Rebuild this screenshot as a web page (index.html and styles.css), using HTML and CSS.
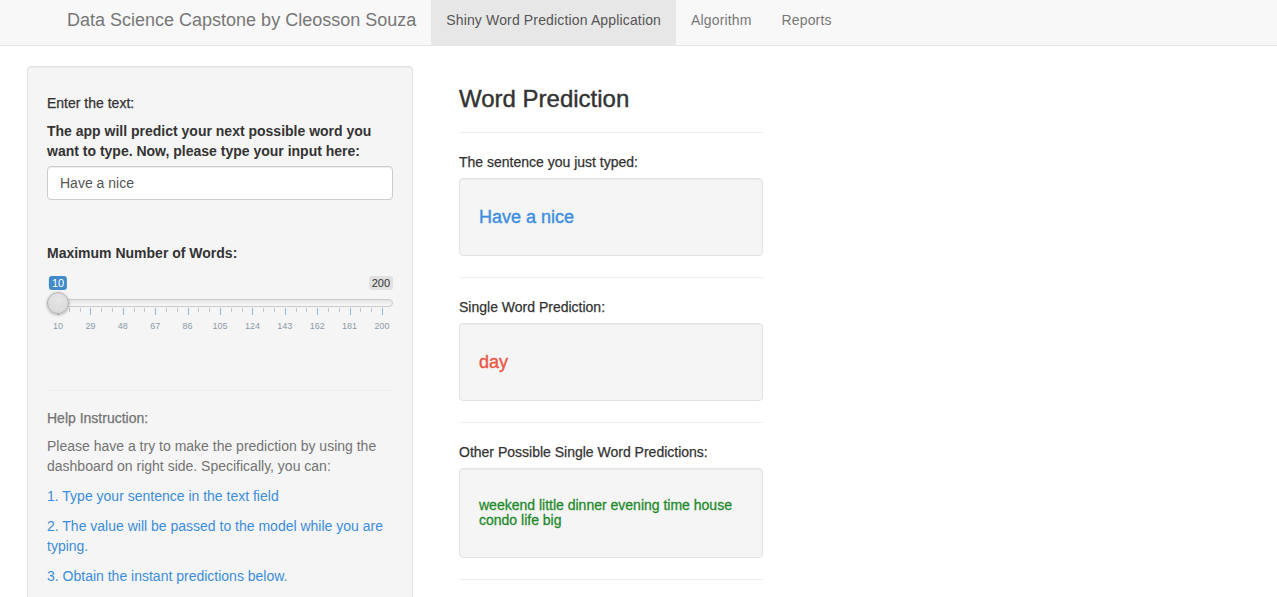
FILE: index.html
```html
<!DOCTYPE html>
<html lang="en">
<head>
<meta charset="utf-8">
<title>Shiny Word Prediction Application</title>
<link rel="stylesheet" href="styles.css">
</head>
<body>
<nav class="navbar">
  <span class="brand">Data Science Capstone by Cleosson Souza</span>
  <ul class="nav">
    <li class="nav-item active">Shiny Word Prediction Application</li>
    <li class="nav-item">Algorithm</li>
    <li class="nav-item">Reports</li>
  </ul>
</nav>

<div class="page">
  <aside class="well sidebar">
    <h5 class="h5">Enter the text:</h5>
    <div class="form-group">
      <label class="ctl-label">The app will predict your next possible word you want to type. Now, please type your input here:</label>
      <input class="text-input" type="text" value="Have a nice">
    </div>
    <div class="form-group slider-group">
      <label class="ctl-label">Maximum Number of Words:</label>
      <div class="irs">
        <span class="irs-single">10</span>
        <span class="irs-max">200</span>
        <div class="irs-line"></div>
        <div class="irs-grid">
          <span class="tick major" style="left:0px"></span>
          <span class="tick minor" style="left:10.8px"></span>
          <span class="tick minor" style="left:21.6px"></span>
          <span class="tick major" style="left:32.4px"></span>
          <span class="tick minor" style="left:43.2px"></span>
          <span class="tick minor" style="left:54px"></span>
          <span class="tick major" style="left:64.8px"></span>
          <span class="tick minor" style="left:75.6px"></span>
          <span class="tick minor" style="left:86.4px"></span>
          <span class="tick major" style="left:97.2px"></span>
          <span class="tick minor" style="left:108px"></span>
          <span class="tick minor" style="left:118.8px"></span>
          <span class="tick major" style="left:129.6px"></span>
          <span class="tick minor" style="left:140.4px"></span>
          <span class="tick minor" style="left:151.2px"></span>
          <span class="tick major" style="left:162px"></span>
          <span class="tick minor" style="left:172.8px"></span>
          <span class="tick minor" style="left:183.6px"></span>
          <span class="tick major" style="left:194.4px"></span>
          <span class="tick minor" style="left:205.2px"></span>
          <span class="tick minor" style="left:216px"></span>
          <span class="tick major" style="left:226.8px"></span>
          <span class="tick minor" style="left:237.6px"></span>
          <span class="tick minor" style="left:248.4px"></span>
          <span class="tick major" style="left:259.2px"></span>
          <span class="tick minor" style="left:270px"></span>
          <span class="tick minor" style="left:280.8px"></span>
          <span class="tick major" style="left:291.6px"></span>
          <span class="tick minor" style="left:302.4px"></span>
          <span class="tick minor" style="left:313.2px"></span>
          <span class="tick major" style="left:324px"></span>
          <span class="grid-text" style="left:0px">10</span>
          <span class="grid-text" style="left:32.4px">29</span>
          <span class="grid-text" style="left:64.8px">48</span>
          <span class="grid-text" style="left:97.2px">67</span>
          <span class="grid-text" style="left:129.6px">86</span>
          <span class="grid-text" style="left:162px">105</span>
          <span class="grid-text" style="left:194.4px">124</span>
          <span class="grid-text" style="left:226.8px">143</span>
          <span class="grid-text" style="left:259.2px">162</span>
          <span class="grid-text" style="left:291.6px">181</span>
          <span class="grid-text" style="left:324px">200</span>
        </div>
        <span class="irs-handle"></span>
      </div>
    </div>
    <hr class="rule">
    <div class="help">
      <h5 class="h5">Help Instruction:</h5>
      <p class="para">Please have a try to make the prediction by using the dashboard on right side. Specifically, you can:</p>
      <p class="para step">1. Type your sentence in the text field</p>
      <p class="para step">2. The value will be passed to the model while you are typing.</p>
      <p class="para step">3. Obtain the instant predictions below.</p>
    </div>
  </aside>

  <main class="main">
    <h3 class="title">Word Prediction</h3>
    <hr class="rule main-rule">
    <div class="out-label">The sentence you just typed:</div>
    <div class="well out-box"><h4 class="out-big blue">Have a nice</h4></div>
    <hr class="rule main-rule">
    <div class="out-label">Single Word Prediction:</div>
    <div class="well out-box"><h4 class="out-big red">day</h4></div>
    <hr class="rule main-rule">
    <div class="out-label">Other Possible Single Word Predictions:</div>
    <div class="well out-box"><h5 class="out-small green">weekend little dinner evening time house condo life big</h5></div>
    <hr class="rule main-rule">
  </main>
</div>
</body>
</html>
```

FILE: styles.css
```css
* { box-sizing: border-box; }

html, body {
  margin: 0;
  padding: 0;
}

body {
  font-family: "Liberation Sans", Arial, Helvetica, sans-serif;
  font-size: 14px;
  line-height: 1.42857;
  color: #333;
  background: #fff;
  overflow: hidden;
}

/* ---------- navbar ---------- */
.navbar {
  display: flex;
  height: 46px;
  padding-left: 52px;
  background: #f8f8f8;
  border-bottom: 1px solid #e7e7e7;
}

.brand {
  height: 45px;
  padding: 10px 15px 0;
  font-size: 18px;
  line-height: 20px;
  color: #777;
}

.nav {
  display: flex;
  margin: 0;
  padding: 0;
  list-style: none;
}

.nav-item {
  height: 45px;
  padding: 10px 15px 0;
  line-height: 20px;
  letter-spacing: 0.15px;
  color: #777;
}

.nav-item.active {
  background: #e7e7e7;
  color: #555;
}

/* ---------- page layout ---------- */
.page {
  display: flex;
  align-items: flex-start;
  gap: 46px;
  padding: 20px 0 0 27px;
}

.well {
  background: #f5f5f5;
  border: 1px solid #e3e3e3;
  border-radius: 4px;
  box-shadow: inset 0 1px 1px rgba(0, 0, 0, 0.05);
}

.sidebar {
  flex: 0 0 386px;
  padding: 19px;
  min-height: 600px;
}

.h5 {
  margin: 10px 0;
  font-size: 14px;
  font-weight: 500;
  line-height: 1.1;
  color: #333;
  -webkit-text-stroke: 0.25px currentColor;
}

.form-group {
  margin-bottom: 15px;
}

.ctl-label {
  display: block;
  margin-bottom: 5px;
  font-weight: 700;
  line-height: 20px;
}

.text-input {
  display: block;
  width: 100%;
  height: 34px;
  padding: 6px 12px;
  font: inherit;
  font-size: 14px;
  color: #555;
  background: #fff;
  border: 1px solid #ccc;
  border-radius: 4px;
  box-shadow: inset 0 1px 1px rgba(0, 0, 0, 0.075);
}

.slider-group {
  margin-top: 43px;
  margin-bottom: 52px;
}

/* ---------- slider ---------- */
.irs {
  position: relative;
  height: 70px;
}

.irs-single,
.irs-max {
  position: absolute;
  top: 8px;
  height: 14px;
  padding: 0 3px;
  font-size: 11px;
  line-height: 14px;
  border-radius: 3px;
}

.irs-single {
  left: 11px;
  transform: translateX(-50%);
  background: #428bca;
  color: #fff;
}

.irs-max {
  right: 0;
  background: #e1e1e1;
  color: #333;
}

.irs-line {
  position: absolute;
  top: 31px;
  left: 0;
  right: 0;
  height: 8px;
  background: linear-gradient(#e4e4e4, #f8f8f8);
  border: 1px solid #cccccc;
  border-radius: 8px;
}

.irs-handle {
  position: absolute;
  top: 24px;
  left: 0;
  width: 22px;
  height: 22px;
  border-radius: 50%;
  background: radial-gradient(circle at 50% 35%, #e6e6e6, #d6d6d6);
  border: 1px solid #b3b3b3;
  box-shadow: 0 1px 3px rgba(0, 0, 0, 0.3);
}

.irs-grid {
  position: absolute;
  top: 40px;
  left: 11px;
  right: 11px;
  height: 24px;
}

.tick {
  position: absolute;
  top: 0;
  width: 1px;
}

.tick.major {
  height: 7px;
  background: #8fb6e0;
}

.tick.minor {
  height: 4px;
  background: #c4c4c4;
}

.grid-text {
  position: absolute;
  top: 12px;
  transform: translateX(-50%);
  font-size: 9px;
  line-height: 12px;
  color: #8e9aa6;
  white-space: nowrap;
}

/* ---------- help ---------- */
.rule {
  margin: 20px 0;
  border: 0;
  border-top: 1px solid #eee;
  height: 0;
}

.help .h5 {
  color: #737373;
}

.para {
  margin: 0 0 10px;
  color: #737373;
}

.para.step {
  color: #3b8ddb;
}

/* ---------- main ---------- */
.main {
  flex: 0 0 304px;
  display: block;
}

.title {
  margin: 20px 0 10px;
  font-size: 24px;
  font-weight: 500;
  line-height: 1.1;
  color: #333;
  -webkit-text-stroke: 0.4px currentColor;
}

.main-rule {
  margin-bottom: 19px;
}

.out-label {
  margin-bottom: 6px;
  line-height: 20px;
  -webkit-text-stroke: 0.25px currentColor;
}

.out-box {
  margin-bottom: 21px;
  padding: 19px;
  min-height: 20px;
}

.out-big {
  margin: 10px 0;
  font-size: 18px;
  font-weight: 500;
  line-height: 18px;
  -webkit-text-stroke: 0.4px currentColor;
}

.out-small {
  margin: 10px 0;
  font-size: 14px;
  font-weight: 500;
  line-height: 15px;
  -webkit-text-stroke: 0.3px currentColor;
}

.blue { color: #3c8fde; }
.red { color: #ea5748; }
.green { color: #1f8a2c; }
```
